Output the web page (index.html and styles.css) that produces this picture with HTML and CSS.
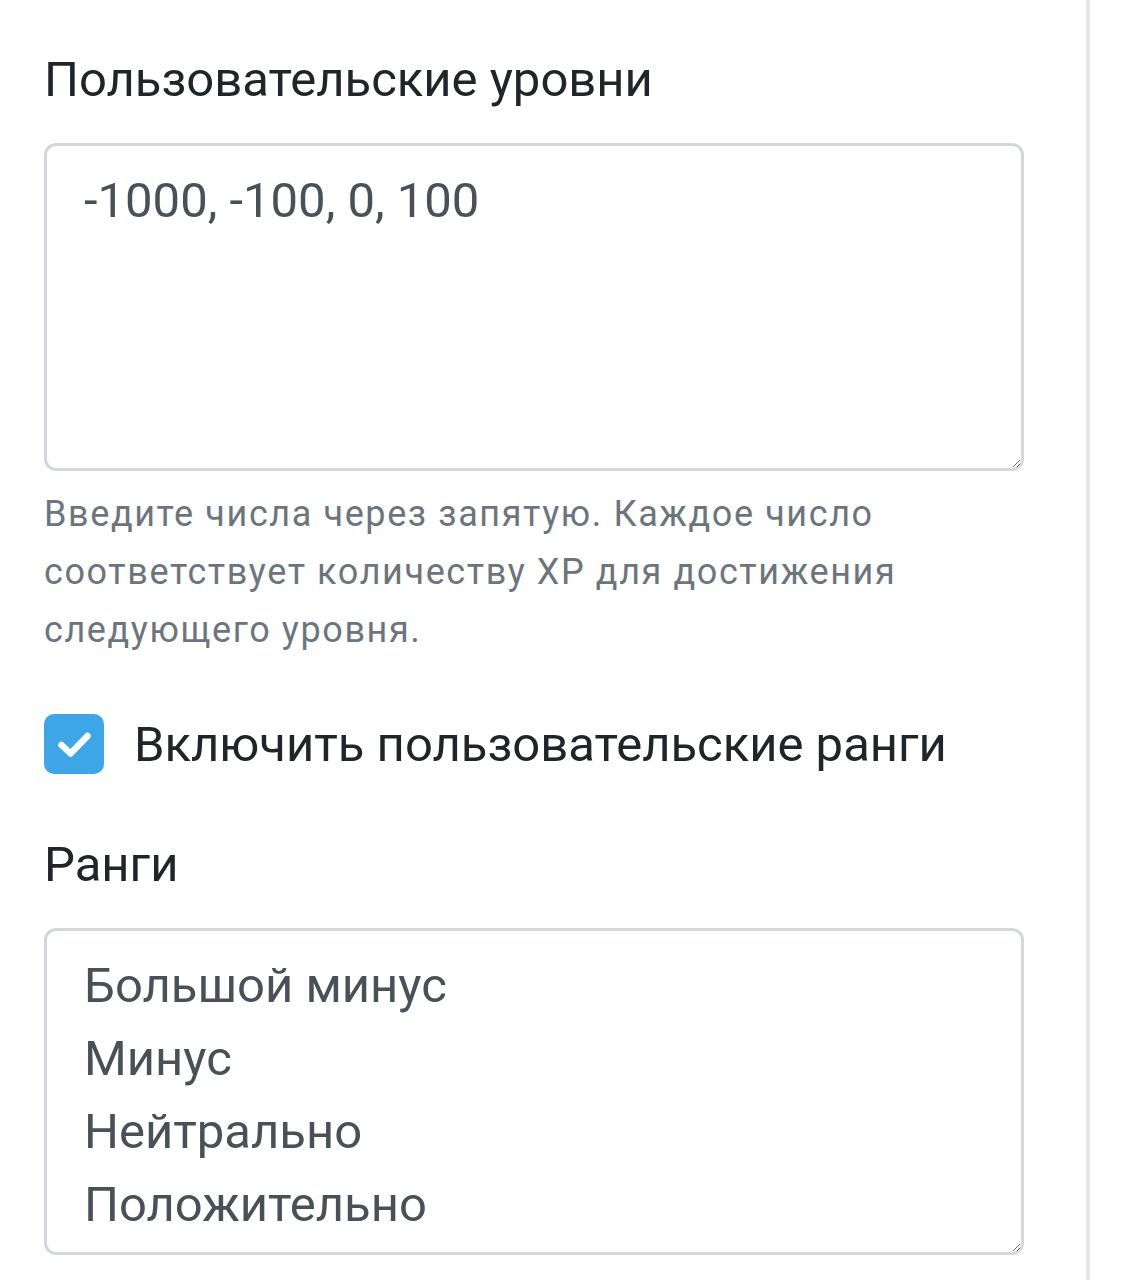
FILE: index.html
```html
<!DOCTYPE html>
<html lang="ru">
<head>
    <meta charset="UTF-8">
    <meta name="viewport" content="width=device-width, initial-scale=1.0">
    <title>Настройки уровней</title>
    <link rel="stylesheet" href="styles.css">
</head>
<body>
    <div class="page">
        <div class="panel">
            <div class="form-group">
                <label class="field-label" for="levels">Пользовательские уровни</label>
                <textarea id="levels" class="field levels-field">-1000, -100, 0, 100</textarea>
                <p class="help">Введите числа через запятую. Каждое число соответствует количеству XP для достижения следующего уровня.</p>
            </div>

            <label class="check-row">
                <input type="checkbox" checked>
                <span class="check-box">
                    <svg viewBox="0 0 60 60" width="60" height="60"><path d="M17.5 31l9 8.5L43.5 22" fill="none" stroke="#fff" stroke-width="6.5" stroke-linecap="round" stroke-linejoin="round"/></svg>
                </span>
                <span class="check-text">Включить пользовательские ранги</span>
            </label>

            <div class="form-group ranks-group">
                <label class="field-label" for="ranks">Ранги</label>
                <textarea id="ranks" class="field ranks-field">Большой минус
Минус
Нейтрально
Положительно</textarea>
            </div>
        </div>
    </div>
</body>
</html>
```

FILE: styles.css
```css
body {
    margin: 0;
    background: #fff;
    font-family: Roboto, "Noto Sans", sans-serif;
    color: #212529;
}
.page {
    width: 1086px;
    min-height: 1280px;
    border-right: 4px solid #e6e6e6;
    box-sizing: content-box;
}
.panel {
    padding: 51px 62px 0 44px;
}
.field-label {
    display: block;
    font-size: 49px;
    line-height: 58px;
    margin-bottom: 34px;
}
.field {
    display: block;
    width: 980px;
    box-sizing: border-box;
    border: 3px solid #d3d7dc;
    border-radius: 12px;
    background: #fff;
    color: #495057;
    font-family: Roboto, "Noto Sans", sans-serif;
    font-size: 49px;
    line-height: 73px;
    padding: 18px 37px 10px;
    overflow: hidden;
    outline: none;
}
.levels-field {
    height: 328px;
}
.ranks-field {
    height: 327px;
}
.help {
    margin: 14px 0 0;
    font-size: 36px;
    letter-spacing: 1.6px;
    line-height: 58px;
    color: #6c757d;
}
.check-row {
    display: flex;
    align-items: center;
    gap: 30px;
    margin-top: 55px;
    height: 60px;
}
.check-row input {
    display: none;
}
.check-box {
    width: 60px;
    height: 60px;
    border-radius: 10px;
    background: #3ea6e6;
    display: flex;
    align-items: center;
    justify-content: center;
}
.check-text {
    font-size: 49px;
    color: #212529;
}
.ranks-group {
    margin-top: 62px;
}
```
